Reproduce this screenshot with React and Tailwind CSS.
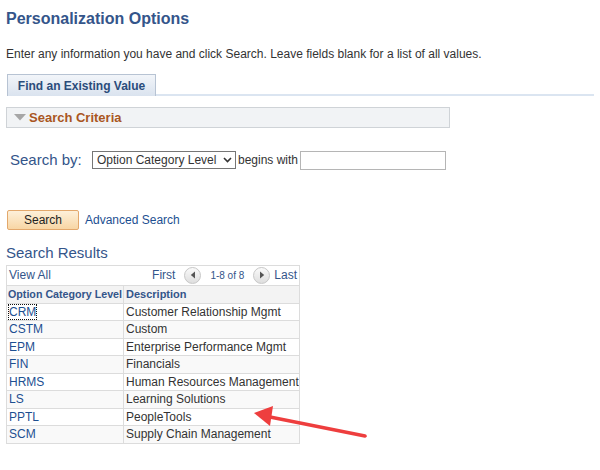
import React from 'react';

const results = [
  { code: 'CRM', desc: 'Customer Relationship Mgmt' },
  { code: 'CSTM', desc: 'Custom' },
  { code: 'EPM', desc: 'Enterprise Performance Mgmt' },
  { code: 'FIN', desc: 'Financials' },
  { code: 'HRMS', desc: 'Human Resources Management' },
  { code: 'LS', desc: 'Learning Solutions' },
  { code: 'PPTL', desc: 'PeopleTools' },
  { code: 'SCM', desc: 'Supply Chain Management' },
];

const NavButton = ({ dir }) => (
  <span className="inline-flex h-[17px] w-[17px] items-center justify-center rounded-full border border-[#c8c8c8] bg-gradient-to-b from-[#fafafa] to-[#dedede]">
    <svg width="6" height="8" viewBox="0 0 6 8">
      {dir === 'left' ? (
        <path d="M5 0.5 L0.8 4 L5 7.5 Z" fill="#555" />
      ) : (
        <path d="M1 0.5 L5.2 4 L1 7.5 Z" fill="#555" />
      )}
    </svg>
  </span>
);

const App = () => {
  return (
    <div className="relative h-[470px] w-[600px] overflow-hidden bg-white font-['Liberation_Sans',Arial,sans-serif] text-[#333]">
      <div className="px-[6px] pt-[9px]">
        <h1 className="text-[16px] font-bold leading-[20px] text-[#34558a]">Personalization Options</h1>
        <p className="mt-[18px] text-[12px] leading-[15px] text-[#333]">
          Enter any information you have and click Search. Leave fields blank for a list of all values.
        </p>

        {/* Tabs */}
        <div className="mt-[12px] flex items-end">
          <div className="ml-[1px] flex h-[22px] w-[149px] items-center justify-center border border-b-0 border-[#b7c3d3] bg-gradient-to-b from-[#f2f5f9] to-[#dae3ef] text-[12px] font-bold text-[#2b4c7b]">
            Find an Existing Value
          </div>
          <div className="h-[2px] flex-1 bg-[#dbe5f1]" />
        </div>

        {/* Search criteria */}
        <div className="mt-[11px] flex h-[21px] w-[444px] items-center border border-[#cfd3d7] bg-[#f1f3f5] pl-[7px]">
          <svg width="12" height="7" viewBox="0 0 12 7" className="mr-[3px]">
            <path d="M0 0 H12 L6 6.5 Z" fill="#a6a6a6" />
          </svg>
          <span className="text-[13px] font-bold text-[#a9561f]">Search Criteria</span>
        </div>

        <div className="mt-[21px] flex items-center pl-[4px]">
          <span className="w-[82px] text-[15px] text-[#34558a]">Search by:</span>
          <div className="flex h-[18px] w-[144px] items-center justify-between border border-[#767676] bg-white pl-[4px] pr-[3px] text-[12px] text-[#333]">
            <span>Option Category Level</span>
            <svg width="9" height="6" viewBox="0 0 9 6">
              <path d="M1 1 L4.5 4.5 L8 1" stroke="#333" strokeWidth="1.6" fill="none" />
            </svg>
          </div>
          <span className="ml-[2px] text-[12px] text-[#333]">begins with</span>
          <div className="ml-[2px] h-[19px] w-[146px] border border-[#b5b5b5] bg-white" />
        </div>

        <div className="mt-[38px] flex items-center">
          <button className="ml-[1px] h-[20px] w-[72px] rounded-[2px] border border-[#e3a86c] bg-gradient-to-b from-[#fdf0da] to-[#f8d6a4] text-[12px] text-[#222]">
            Search
          </button>
          <span className="ml-[6px] text-[12px] text-[#1d4f91]">Advanced Search</span>
        </div>

        <div className="mt-[14px] text-[15px] leading-[18px] text-[#34558a]">Search Results</div>

        <table className="mt-[3px] w-[294px] table-fixed border-collapse whitespace-nowrap text-[12px]">
          <colgroup>
            <col className="w-[117px]" />
            <col />
          </colgroup>
          <tbody>
            <tr className="h-[20px]">
              <td colSpan={2} className="border border-[#dcdcdc] px-[2px] py-0">
                <div className="flex items-center text-[#34558a]">
                  <span>View All</span>
                  <span className="ml-auto">First</span>
                  <span className="ml-[9px]"><NavButton dir="left" /></span>
                  <span className="ml-[9px] text-[10px] text-[#34558a]">1-8 of 8</span>
                  <span className="ml-[9px]"><NavButton dir="right" /></span>
                  <span className="ml-[4px]">Last</span>
                </div>
              </td>
            </tr>
            <tr className="h-[18px] bg-[#f3f3f3]">
              <th className="border border-[#dcdcdc] px-[1px] py-0 text-left text-[10.7px] font-bold text-[#34558a]">
                Option Category Level
              </th>
              <th className="border border-[#dcdcdc] px-[2px] py-0 text-left text-[11px] font-bold text-[#34558a]">
                Description
              </th>
            </tr>
            {results.map((r, i) => (
              <tr key={r.code} className={`h-[17.5px] ${i % 2 === 1 ? 'bg-[#f9f9f9]' : 'bg-white'}`}>
                <td className="border border-[#dcdcdc] px-[2px] py-0 leading-[16px] text-[#1d4f91]">
                  <span className={i === 0 ? 'outline-dotted outline-1 outline-[#111]' : ''}>{r.code}</span>
                </td>
                <td className="overflow-hidden border border-[#dcdcdc] px-[2px] py-0 leading-[16px] text-[#333]">{r.desc}</td>
              </tr>
            ))}
          </tbody>
        </table>
      </div>

      {/* red annotation arrow */}
      <svg className="absolute left-0 top-0" width="600" height="470" viewBox="0 0 600 470">
        <line x1="365" y1="436" x2="270" y2="417" stroke="#ee3e3e" strokeWidth="3.5" strokeLinecap="round" />
        <path d="M254 413 L273 406 L270 426 Z" fill="#ee3e3e" />
      </svg>
    </div>
  );
};

export default App;
